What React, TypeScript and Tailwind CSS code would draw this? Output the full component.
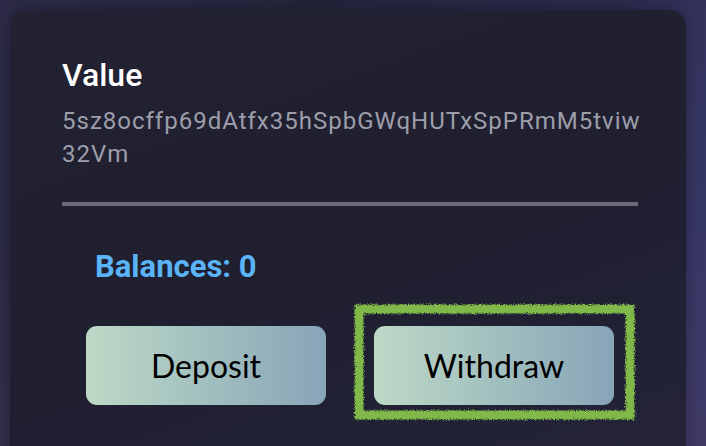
import React from "react";

export default function App() {
  return (
    <div className="w-[706px] h-[446px] overflow-hidden relative bg-[linear-gradient(100deg,#2c2a46_0%,#23243a_40%,#2a2a4c_80%,#3b3b6e_100%)]">
      <div className="absolute inset-0 bg-[linear-gradient(180deg,rgba(0,0,0,0)_50%,rgba(70,55,85,0.35)_100%)]" />
      <div className="relative mt-[10px] ml-[10px] mr-[20px] h-[460px] rounded-[16px] bg-[linear-gradient(160deg,#222233_0%,#1f1f30_50%,#242338_100%)] shadow-[0_0_12px_rgba(0,0,0,0.25)] pl-[52px] pr-[48px] pt-[47px]">
        <div className="font-['Roboto',sans-serif] text-white font-medium text-[32px] leading-[36px]">Value</div>
        <div className="mt-[12px] font-['Roboto',sans-serif] text-[#9d9eaa] text-[24px] leading-[33px] tracking-[1px] whitespace-nowrap">
          <div>5sz8ocffp69dAtfx35hSpbGWqHUTxSpPRmM5tviw</div>
          <div>32Vm</div>
        </div>
        <div className="mt-[31px] h-[4px] bg-[#6a6a78]" />
        <div className="mt-[43px] ml-[33px] font-['Roboto',sans-serif] font-bold text-[31px] leading-[36px] text-[#5ab4f7]">Balances: 0</div>
        <div className="mt-[41px] flex gap-[48px] pl-[24px]">
          <button className="w-[240px] h-[79px] rounded-[11px] bg-[linear-gradient(90deg,#bdd9c6,#87a5b8)] text-black text-[32px] font-['Lato',sans-serif]">
            Deposit
          </button>
          <div className="relative">
            <button className="w-[240px] h-[79px] rounded-[11px] bg-[linear-gradient(90deg,#bdd9c6,#87a5b8)] text-black text-[32px] font-['Lato',sans-serif]">
              Withdraw
            </button>
            <svg className="absolute left-[-22px] top-[-24px]" width="288" height="124" viewBox="0 0 288 124">
              <defs>
                <filter id="rough" x="-5%" y="-10%" width="110%" height="120%">
                  <feTurbulence type="fractalNoise" baseFrequency="0.9" numOctaves="2" seed="3" />
                  <feDisplacementMap in="SourceGraphic" scale="5" />
                </filter>
              </defs>
              <rect x="7" y="7" width="271" height="106" fill="none" stroke="#80b84a" strokeWidth="9" filter="url(#rough)" />
            </svg>
          </div>
        </div>
      </div>
    </div>
  );
}
